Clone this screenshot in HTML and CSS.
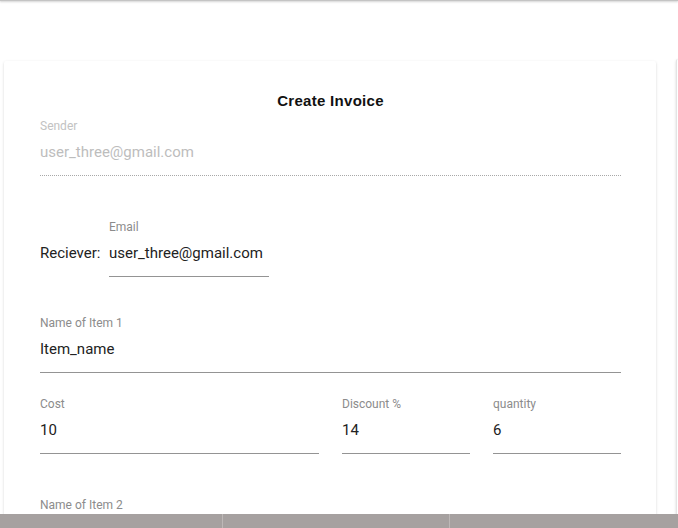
FILE: index.html
```html
<!DOCTYPE html>
<html>
<head>
<meta charset="utf-8">
<link rel="stylesheet" href="styles.css">
</head>
<body>
<div class="appbar"></div>
<main class="cards">
  <section class="card">
    <h1 class="title">Create Invoice</h1>
    <div class="field disabled">
      <div class="label">Sender</div>
      <div class="input">user_three@gmail.com</div>
    </div>
    <div class="receiver">
      <span class="receiver-text">Reciever:</span>
      <div class="field email">
        <div class="label">Email</div>
        <div class="input">user_three@gmail.com</div>
      </div>
    </div>
    <div class="field item">
      <div class="label">Name of Item 1</div>
      <div class="input">Item_name</div>
    </div>
    <div class="row">
      <div class="field">
        <div class="label">Cost</div>
        <div class="input">10</div>
      </div>
      <div class="field">
        <div class="label">Discount %</div>
        <div class="input">14</div>
      </div>
      <div class="field">
        <div class="label">quantity</div>
        <div class="input">6</div>
      </div>
    </div>
    <div class="field item2">
      <div class="label">Name of Item 2</div>
    </div>
  </section>
  <section class="card side"></section>
</main>
<nav class="bottombar">
  <div class="tab"></div>
  <div class="tab"></div>
  <div class="tab"></div>
</nav>
</body>
</html>
```
FILE: styles.css
```css
html, body {
  margin: 0;
  padding: 0;
  background: #ffffff;
  overflow: hidden;
  height: 528px;
}
body {
  font-family: Roboto, "Liberation Sans", sans-serif;
  color: rgba(0,0,0,0.87);
}
.appbar {
  height: 1px;
  background: #c4c4c4;
  box-shadow: 0 1px 2px rgba(0,0,0,0.25);
}
.cards {
  display: flex;
  gap: 20px;
  padding: 60px 0 0 4px;
  height: 527px;
  box-sizing: border-box;
  overflow: hidden;
}
.card {
  flex: 0 0 652px;
  box-sizing: border-box;
  background: #fff;
  padding: 30px 35px 40px 36px;
  box-shadow: 0 1px 3px rgba(0,0,0,0.14), 0 1px 1px rgba(0,0,0,0.08), 0 2px 1px -1px rgba(0,0,0,0.06);
  border-radius: 2px;
  height: 520px;
}
.card.side {
  flex: 0 0 300px;
  padding: 0;
  margin-top: -2px;
  border-left: 1px solid #e4e4e4;
}
.title {
  margin: 0 0 8px;
  text-align: center;
  font-family: "Comic Sans MS", "Liberation Sans", sans-serif;
  font-weight: bold;
  font-size: 15px;
  line-height: 20px;
  color: #111;
  letter-spacing: 0.3px;
}
.field {
  display: flex;
  flex-direction: column;
}
.label {
  font-size: 12px;
  line-height: 14px;
  height: 14px;
  color: #8c8c8c;
}
.input {
  margin-top: 9px;
  font-size: 15px;
  line-height: 20px;
  padding-bottom: 13px;
  border-bottom: 1px solid #949494;
  color: #222;
}
.disabled .label {
  color: #c2c2c2;
}
.disabled .input {
  color: #bdbdbd;
  border-bottom: 1px dotted #a8a8a8;
}
.receiver {
  display: flex;
  align-items: flex-end;
  margin-top: 44px;
}
.receiver-text {
  font-size: 15px;
  line-height: 20px;
  padding-bottom: 14px;
  width: 69px;
  color: #222;
}
.email {
  width: 160px;
}
.item {
  margin-top: 39px;
}
.row {
  display: grid;
  grid-template-columns: 279px 128px 128px;
  column-gap: 23px;
  margin-top: 24px;
}
.item2 {
  margin-top: 44px;
}
.bottombar {
  position: fixed;
  left: 0;
  right: 0;
  bottom: 0;
  height: 14px;
  background: #a6a1a0;
  display: grid;
  grid-template-columns: 223px 227px 1fr;
}
.tab {
  border-right: 1px solid #bdb8b7;
}
.tab:last-child {
  border-right: none;
}
```
